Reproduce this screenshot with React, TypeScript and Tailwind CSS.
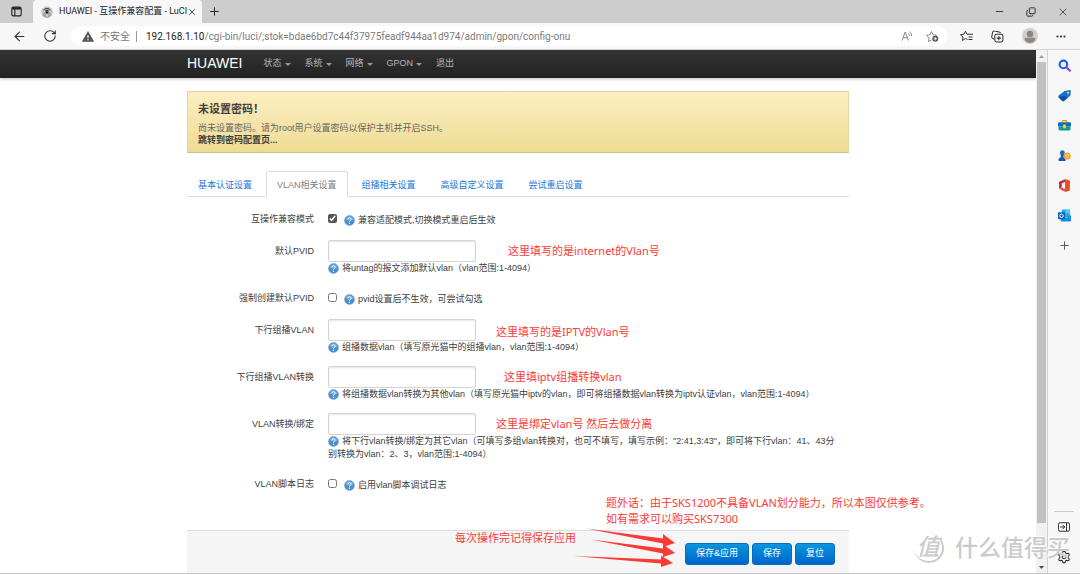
import React from "react";
import {
    ArrowLeft,
    Copy,
    Minus,
    Plus,
    RotateCw,
    Settings,
    X,
} from "lucide-react";

type Field = {
    id: string;
    label: string;
    type: "checkbox" | "text";
    help: string;
    checked?: boolean;
    note?: string;
    noteClass?: string;
};

const menuItems = [
    { text: "状态", dropdown: true },
    { text: "系统", dropdown: true },
    { text: "网络", dropdown: true },
    { text: "GPON", dropdown: true },
    { text: "退出", dropdown: false },
];

const tabs = ["基本认证设置", "VLAN相关设置", "组播相关设置", "高级自定义设置", "尝试重启设置"];

const fields: Field[] = [
    {
        id: "compat",
        label: "互操作兼容模式",
        type: "checkbox",
        checked: true,
        help: "兼容适配模式,切换模式重启后生效",
    },
    {
        id: "pvid",
        label: "默认PVID",
        type: "text",
        help: "将untag的报文添加默认vlan（vlan范围:1-4094）",
        note: "这里填写的是internet的Vlan号",
        noteClass: "ml-8",
    },
    {
        id: "force-pvid",
        label: "强制创建默认PVID",
        type: "checkbox",
        help: "pvid设置后不生效，可尝试勾选",
    },
    {
        id: "mcast",
        label: "下行组播VLAN",
        type: "text",
        help: "组播数据vlan（填写原光猫中的组播vlan，vlan范围:1-4094）",
        note: "这里填写的是IPTV的Vlan号",
        noteClass: "ml-5 pt-1",
    },
    {
        id: "mcast-trans",
        label: "下行组播VLAN转换",
        type: "text",
        help: "将组播数据vlan转换为其他vlan（填写原光猫中iptv的vlan，即可将组播数据vlan转换为iptv认证vlan，vlan范围:1-4094）",
        note: "这里填iptv组播转换vlan",
        noteClass: "ml-7",
    },
    {
        id: "vlan-bind",
        label: "VLAN转换/绑定",
        type: "text",
        help: "将下行vlan转换/绑定为其它vlan（可填写多组vlan转换对，也可不填写，填写示例：\"2:41,3:43\"，即可将下行vlan：41、43分别转换为vlan：2、3，vlan范围:1-4094）",
        note: "这里是绑定vlan号 然后去做分离",
        noteClass: "ml-5",
    },
    {
        id: "log",
        label: "VLAN脚本日志",
        type: "checkbox",
        help: "启用vlan脚本调试日志",
    },
];

const noteFont = "font-['Noto_Sans','Noto_Sans_CJK_SC',sans-serif] text-[11px] text-[#fb3a36]";

const HelpIcon = () => (
    <svg viewBox="0 0 22 22" className="mr-[3px] inline-block h-[11px] w-[11px] align-[-3px]">
        <circle cx="11" cy="11" r="10" fill="#4a90cf" stroke="#6f9cc4" strokeWidth="1" />
        <path d="M3 9a8.200 8.200 0 0 1 16 0c-4 3-11 3-16 0z" fill="#8fc0ea" opacity="0.6" />
        <path
            d="M8 8.500a3 3 0 1 1 4.500 2.500c-1.200.7-1.500 1.200-1.500 2.400"
            fill="none"
            stroke="#fff"
            strokeWidth="2"
        />
        <circle cx="11" cy="16.500" r="1.300" fill="#fff" />
    </svg>
);

const TitleBar = () => (
    <div className="flex h-[23px] shrink-0 items-stretch bg-[#cdcdcd] text-[#222]">
        <button aria-label="标签页操作" className="flex w-[33px] items-center justify-center">
            <svg viewBox="0 0 20 20" className="h-[11px] w-[11px]" fill="none" stroke="#222" strokeWidth="2">
                <rect x="1.500" y="2" width="17" height="16" rx="3" />
                <path d="M2 4.500h16" strokeWidth="4" />
                <path d="M7 6v12" />
            </svg>
        </button>
        <div className="flex w-[169px] items-center rounded-t-[4px] bg-[#f7f7f7] pl-2">
            <svg viewBox="0 0 24 24" className="h-3 w-3 shrink-0">
                <circle cx="12" cy="12" r="11.500" fill="#c4c4c4" />
                <path d="M3 19a11.500 11.500 0 0 0 18 0l-3-6H6z" fill="#a5a5a5" />
                <path d="M5 8.500C8.500 4 15.500 4 19 8.500" fill="none" stroke="#333" strokeWidth="2" />
                <path d="M8 10.500c2-2.500 6-2.500 8 0" fill="none" stroke="#333" strokeWidth="2" />
                <circle cx="12" cy="13" r="2.600" fill="#111" />
                <path d="M12 15v6" stroke="#eee" strokeWidth="2" />
            </svg>
            <span className="ml-[6px] flex-1 font-['Roboto','Noto_Sans_CJK_SC',sans-serif] text-[9px] whitespace-nowrap">
                HUAWEI - 互操作兼容配置 - LuCI
            </span>
            <button aria-label="关闭标签页" className="mr-[6px]">
                <X size={10} strokeWidth={2} />
            </button>
        </div>
        <button aria-label="新建标签页" className="flex w-6 items-center justify-center">
            <Plus size={13} strokeWidth={1.8} />
        </button>
        <div className="ml-auto flex items-center gap-[21px] pr-[11px] text-[#333]">
            <button aria-label="最小化">
                <Minus size={11} strokeWidth={2} />
            </button>
            <button aria-label="还原">
                <Copy size={10} strokeWidth={2.4} className="-scale-x-100 rotate-180" />
            </button>
            <button aria-label="关闭">
                <X size={12} strokeWidth={1.6} />
            </button>
        </div>
    </div>
);

const Toolbar = () => (
    <div className="flex h-[27px] shrink-0 items-center border-b border-[#d2d2d2] bg-[#f7f7f7]">
        <button aria-label="后退" className="ml-3">
            <ArrowLeft size={15} strokeWidth={1.7} className="text-[#333]" />
        </button>
        <button aria-label="刷新" className="ml-4">
            <RotateCw size={14} strokeWidth={1.9} className="text-[#333]" />
        </button>
        <div className="ml-[14px] flex h-5 min-w-0 flex-1 items-center rounded-full bg-white pr-2 pl-[11px]">
            <svg viewBox="0 0 24 22" className="h-[11px] w-3 shrink-0">
                <path d="M12 1 23.500 21H.5z" fill="#555" stroke="#555" strokeLinejoin="round" />
                <path d="M12 8v6M12 16v2.500" stroke="#fff" strokeWidth="2.200" />
            </svg>
            <span className="ml-[6px] shrink-0 text-[10px] text-[#767676]">不安全</span>
            <span className="mr-[9px] ml-[6px] h-[11px] w-px shrink-0 bg-[#999]" />
            <label htmlFor="address" className="shrink-0 font-['Roboto',sans-serif] text-[10px] text-[#222]">
                192.168.1.10
            </label>
            <input
                id="address"
                type="text"
                className="min-w-0 flex-1 font-['Roboto',sans-serif] text-[10px] text-[#7b7b7b] outline-none"
                defaultValue="/cgi-bin/luci/;stok=bdae6bd7c44f37975feadf944aa1d974/admin/gpon/config-onu"
            />
            <button aria-label="大声朗读">
                <svg viewBox="0 0 24 24" className="h-3 w-3" fill="none" stroke="#777" strokeWidth="1.800">
                    <path d="M2 21 8.500 4 15 21M4.500 15.500h8" />
                    <path d="M15 7c1.500 1 2 2.500 2 4.500M17 3.500c3 2 4.500 5 4 8.500" />
                </svg>
            </button>
            <button aria-label="收藏此页" className="ml-[13px]">
                <svg viewBox="0 0 26 24" className="h-3 w-[13px]" fill="none" stroke="#777" strokeWidth="1.700">
                    <path d="M11 20l-6 3 1.200-7L1 10.500l7-1L11 3l3 6.500 7 1-2 2" strokeLinejoin="round" />
                    <circle cx="18.500" cy="17.500" r="6" fill="#555" stroke="none" />
                    <path d="M18.500 14v7M15 17.500h7" stroke="#fff" />
                </svg>
            </button>
        </div>
        <div className="ml-[13px] flex items-center text-[#333]">
            <button aria-label="收藏夹">
                <svg viewBox="0 0 26 24" className="h-3 w-[13px]" fill="none" stroke="#333" strokeWidth="2">
                    <path d="M15 19l-4-2-6 4 1-7-5-4.500 7-1 3-6 3 6h12M17 14h8M17 19h8" strokeLinejoin="round" />
                </svg>
            </button>
            <button aria-label="集锦" className="ml-[18px]">
                <svg viewBox="0 0 24 24" className="h-[13px] w-[13px]" fill="none" stroke="#333" strokeWidth="1.900">
                    <path d="M6 17l-3-1.500a3 3 0 0 1-1.500-3.500L3 4a3 3 0 0 1 3.500-2L15 3.500a3 3 0 0 1 2.500 2.500" />
                    <rect x="7" y="8" width="15" height="14" rx="3" />
                    <path d="M14.500 11v8M10.500 15h8" />
                </svg>
            </button>
            <button aria-label="个人资料" className="ml-[18px]">
                <svg viewBox="0 0 32 32" className="h-4 w-4">
                    <circle cx="16" cy="16" r="16" fill="#d3d0cd" />
                    <circle cx="16" cy="12" r="6.500" fill="#8b8785" />
                    <path d="M5 22c0-2 2-2.500 3-2.500h16c1 0 3 .5 3 2.500-2 5-6 8-11 8s-9-3-11-8z" fill="#8b8785" />
                </svg>
            </button>
            <button aria-label="设置及其他" className="mr-[14px] ml-[18px]">
                <svg viewBox="0 0 20 6" className="h-[3px] w-[10px]" fill="#333">
                    <circle cx="3" cy="3" r="2.200" />
                    <circle cx="10" cy="3" r="2.200" />
                    <circle cx="17" cy="3" r="2.200" />
                </svg>
            </button>
        </div>
    </div>
);

const Navbar = () => (
    <header className="h-7 bg-linear-to-b from-[#333] to-[#222] shadow-[0_1px_3px_rgba(0,0,0,0.25)]">
        <nav className="mx-auto flex h-full max-w-[662px] items-center">
            <a href="#home" className="-mt-px mr-[21px] text-[14px] text-white">
                HUAWEI
            </a>
            <ul className="flex gap-[14px] text-[9px] text-[#b5b5b5]">
                {menuItems.map((item) => (
                    <li key={item.text}>
                        <a href={`#${item.text}`} className="flex items-center gap-[3px]">
                            {item.text}
                            {item.dropdown && (
                                <svg viewBox="0 0 6 3" className="h-[3px] w-[6px]" fill="#999">
                                    <path d="M0 0h6L3 3z" />
                                </svg>
                            )}
                        </a>
                    </li>
                ))}
            </ul>
        </nav>
    </header>
);

const FieldRow = ({ field }: { field: Field }) => (
    <div className="flex gap-[14px]">
        <label htmlFor={field.id} className="h-5 w-[127px] shrink-0 text-right leading-[22px]">
            {field.label}
        </label>
        {field.type === "checkbox" ? (
            <div className="flex h-5 items-center gap-[7px]">
                <input
                    id={field.id}
                    type="checkbox"
                    defaultChecked={field.checked}
                    className="h-[9px] w-[9px] accent-[#555]"
                />
                <span className="pt-1 leading-[14px]">
                    <HelpIcon />
                    {field.help}
                </span>
            </div>
        ) : (
            <div className="max-w-[514px]">
                <div className="flex h-[22px] items-center">
                    <input
                        id={field.id}
                        type="text"
                        className="h-[22px] w-[148px] rounded-[2px] border border-[#d4d4d4] px-1 shadow-[inset_0_1px_2px_rgba(0,0,0,0.1)]"
                    />
                    <span className={`${noteFont} ${field.noteClass}`}>{field.note}</span>
                </div>
                <p className="leading-[13px]">
                    <HelpIcon />
                    {field.help}
                </p>
            </div>
        )}
    </div>
);

const actionClass =
    "h-[22px] rounded-[3px] border border-[#0a6cc0] bg-linear-to-b from-[#0b96dc] to-[#0064cd] px-[10px] text-[9px] text-white";

const FormActions = () => (
    <div className="relative mt-[37px] flex h-[43px] items-center justify-end gap-[3px] border-t border-[#ddd] bg-[#f5f5f5] pt-1 pr-[14px]">
        <button type="submit" className={actionClass}>
            保存&amp;应用
        </button>
        <button type="submit" className={actionClass}>
            保存
        </button>
        <button type="reset" className={actionClass}>
            复位
        </button>

        {/* Hand-written remarks over the form */}
        <p className={`${noteFont} absolute -top-9 left-[419px] leading-4 whitespace-nowrap`}>
            题外话：由于SKS1200不具备VLAN划分能力，所以本图仅供参考。
            <br />
            如有需求可以购买SKS7300
        </p>
        <p className={`${noteFont} absolute -top-px left-[268px] leading-4 whitespace-nowrap`}>
            每次操作完记得保存应用
        </p>
        <svg viewBox="0 0 104 40" className="absolute -top-1 left-[386px] h-10 w-[104px]" fill="#fb3a36">
            <path d="M13 1.500 90 11.500v-4.500l12 9-12 4v-3.500z" />
            <path d="M18 12.500 90 21.500v-4l12 8.500-12 4v-3.500z" />
            <path d="M0 29 88 32.500v-4l12 7.500-12 4v-3.500z" />
        </svg>
    </div>
);

const Page = () => (
    <main className="min-w-0 flex-1 overflow-hidden bg-white">
        <Navbar />
        <div className="mx-auto mt-[13px] max-w-[662px]">
            <div className="border border-[#e6d6a0] border-b-[#cfc08a] bg-linear-to-b from-[#fceec1] to-[#eedc94] px-[10px] pt-[9px] pb-[6px] leading-3">
                <h4 className="mb-[5px] text-[11px] leading-4 font-bold">未设置密码！</h4>
                <p className="text-[#666]">尚未设置密码。请为root用户设置密码以保护主机并开启SSH。</p>
                <a href="#password" className="block font-bold">
                    跳转到密码配置页...
                </a>
            </div>

            <ul className="mt-[18px] flex gap-[3px] border-b border-[#ddd]">
                {tabs.map((tab, i) => (
                    <li key={tab}>
                        <a
                            href={`#tab-${i}`}
                            className={
                                i === 1
                                    ? "-mb-px block rounded-t-[3px] border border-[#ddd] border-b-white bg-white px-[10px] pt-[2px] leading-[22px] text-[#808080]"
                                    : "block border border-transparent border-b-0 px-[10px] pt-[2px] leading-[22px] text-[#1a76dc]"
                            }
                        >
                            {tab}
                        </a>
                    </li>
                ))}
            </ul>

            <form onSubmit={(e) => e.preventDefault()}>
                <div className="mt-[11px] flex flex-col gap-3">
                    {fields.map((field) => (
                        <FieldRow key={field.id} field={field} />
                    ))}
                </div>
                <FormActions />
            </form>
        </div>
    </main>
);

const ScrollBar = () => (
    <div className="flex w-3 shrink-0 flex-col items-center border-r border-[#d2d2d2] bg-[#f1f1f1]">
        <svg viewBox="0 0 11 12" className="h-3 w-[11px] shrink-0" fill="#999">
            <path d="M3 8h5L5.500 5z" />
        </svg>
        <div className="w-[9px] flex-1 bg-[#c1c1c1]" />
        <svg viewBox="0 0 11 50" className="h-[50px] w-[11px] shrink-0" fill="#444">
            <path d="M3 43h5L5.500 46z" />
        </svg>
    </div>
);

const SideRail = () => (
    <aside className="flex w-8 shrink-0 flex-col items-center bg-[#f7f7f7] pt-[9px] pb-[9px]">
        <div className="flex flex-col items-center gap-[17px]">
            <button aria-label="搜索">
                <svg viewBox="0 0 24 24" className="block h-[13px] w-[13px]" fill="none">
                    <circle cx="10" cy="10" r="7" stroke="#1b62d3" strokeWidth="4" />
                    <path d="M15.500 15.500 22 21.500" stroke="#9a45e8" strokeWidth="4" strokeLinecap="round" />
                </svg>
            </button>
            <button aria-label="购物">
                <svg viewBox="0 0 24 24" className="block h-[13px] w-[13px]">
                    <path d="M12 3.500 22 2c1 0 1.500.5 1.500 1.500L23 12 11 22c-1 .8-2 .8-3 0l-7-7c-.8-1-.8-2 0-3z" fill="#1674d1" />
                    <path d="M1 15l11-3 5 5-6 5c-1 .8-2 .8-3 0z" fill="#0d4fa8" />
                    <circle cx="18.500" cy="7" r="2" fill="#ffd75e" />
                </svg>
            </button>
            <button aria-label="工具">
                <svg viewBox="0 0 24 24" className="block h-[13px] w-[13px]">
                    <path d="M8 7V4.500C8 3.500 8.500 3 9.500 3h5c1 0 1.500.5 1.500 1.500V7" fill="none" stroke="#d99b16" strokeWidth="2" />
                    <rect x="0" y="6" width="24" height="8" rx="1.500" fill="#1769bd" />
                    <path d="M1 14h22v5c0 1-.8 2-2 2H3c-1 0-2-1-2-2z" fill="#129a8c" />
                    <rect x="9.500" y="10" width="5" height="7" rx="1" fill="#ffd14a" />
                </svg>
            </button>
            <button aria-label="游戏">
                <svg viewBox="0 0 24 24" className="block h-[13px] w-[13px]">
                    <circle cx="8" cy="7" r="4.500" fill="#1a6ed0" />
                    <path d="M5 9h6l-1 6 4 3v4H1v-4l4-3z" fill="#1458b8" />
                    <circle cx="17" cy="13" r="6.500" fill="#f0a52c" />
                    <circle cx="15" cy="11.500" r="1.400" fill="#fff0b8" />
                    <circle cx="19" cy="11.500" r="1.400" fill="#fff0b8" />
                    <circle cx="17" cy="15.500" r="1.400" fill="#fff0b8" />
                </svg>
            </button>
            <button aria-label="Office">
                <svg viewBox="0 0 24 24" className="block h-[13px] w-[13px]">
                    <path d="M14 0 2 5v13l5-3V8l7-3z" fill="#c02a30" />
                    <path d="M14 0l8 3v18l-8 3-1-4V5z" fill="#e9501f" />
                    <path d="M2 18l5-2 7 3v5z" fill="#f0423e" />
                </svg>
            </button>
            <button aria-label="Outlook">
                <svg viewBox="0 0 24 24" className="block h-[13px] w-[13px]">
                    <rect x="7" y="1" width="15" height="14" rx="1" fill="#28a8ea" />
                    <path d="M14 1h8v7h-8z" fill="#50d0f5" />
                    <path d="M5 11l10 5 9-5v10c0 1-.8 2-2 2H7c-1 0-2-1-2-2z" fill="#1490df" />
                    <rect x="0" y="6" width="13" height="13" rx="1.500" fill="#0a64b8" />
                    <circle cx="6.500" cy="12.500" r="3.200" fill="none" stroke="#fff" strokeWidth="1.800" />
                </svg>
            </button>
            <button aria-label="添加">
                <Plus size={13} strokeWidth={1.6} className="block text-[#444]" />
            </button>
        </div>
        <div className="mt-auto flex flex-col items-center text-[#333]">
            <span className="mb-[10px] h-px w-5 bg-[#ccc]" />
            <button aria-label="隐藏侧栏">
                <svg viewBox="0 0 24 20" className="block h-[10px] w-3" fill="none" stroke="#333" strokeWidth="2">
                    <rect x="1" y="1.500" width="22" height="17" rx="3" />
                    <path d="M17 2v16M4 10h9M9.500 6l4 4-4 4" />
                </svg>
            </button>
            <button aria-label="设置" className="mt-[18px]">
                <Settings size={14} strokeWidth={1.9} className="block" />
            </button>
        </div>
    </aside>
);

const Watermark = () => (
    <div className="pointer-events-none absolute right-[10px] bottom-[9px] flex items-center gap-[11px] text-[23px] leading-8 font-medium text-[#cbcbcb] text-shadow-[-1px_-1px_0_#fff]">
        <span className="flex h-[30px] w-[30px] items-center justify-center rounded-full border-r-2 border-b-2 border-[#cbcbcb] italic">
            值
        </span>
        什么值得买
    </div>
);

const App = () => (
    <div className="relative flex h-screen flex-col overflow-hidden border-b border-[#c8c8c8] bg-white font-['Liberation_Sans','Noto_Sans_CJK_SC',sans-serif] text-[9px] text-[#404040]">
        <TitleBar />
        <Toolbar />
        <div className="flex min-h-0 flex-1">
            <Page />
            <ScrollBar />
            <SideRail />
        </div>
        <Watermark />
    </div>
);

export default App;
